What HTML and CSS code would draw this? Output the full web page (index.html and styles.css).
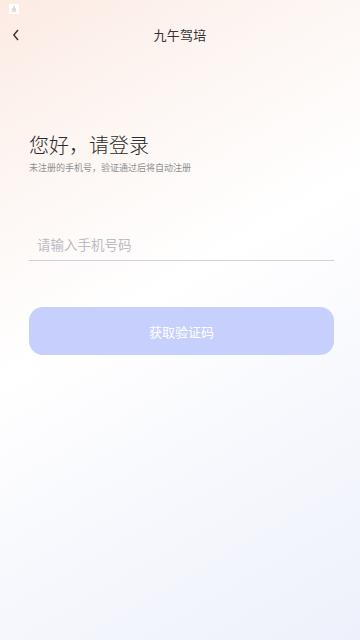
FILE: index.html
```html
<!DOCTYPE html>
<html lang="zh">
<head>
<meta charset="utf-8">
<link rel="stylesheet" href="styles.css">
</head>
<body>
<div class="page">
  <div class="status"><span class="status-icon"><svg width="10" height="10" viewBox="0 0 10 10"><rect width="10" height="10" rx="1" fill="#fff"/><path d="M3.2 4.2 h3.6 v2.6 h-3.6 Z M2.5 7.2 h5 v0.8 h-5 Z M4 2.6 h2 v1.2 h-2 Z" fill="#d9d2ce"/></svg></span></div>
  <div class="navbar">
    <span class="back"><svg width="8" height="12" viewBox="0 0 8 12"><path d="M6 1 L1.8 6 L6 11" fill="none" stroke="#333" stroke-width="1.4"/></svg></span>
    <span class="title">九午驾培</span>
  </div>
  <div class="content">
    <h1 class="heading">您好，请登录</h1>
    <p class="sub">未注册的手机号，验证通过后将自动注册</p>
    <div class="field"><span class="placeholder">请输入手机号码</span></div>
    <div class="btn">获取验证码</div>
  </div>
</div>
</body>
</html>
```
FILE: styles.css
```css
html, body { margin: 0; padding: 0; }
body {
  font-family: "Noto Sans CJK SC", "Noto Sans", sans-serif;
  width: 360px;
  height: 640px;
  overflow: hidden;
}
svg { display: block; }
.page {
  width: 360px;
  height: 640px;
  background: linear-gradient(150deg, #fcebe3 0%, #fdf6f3 22%, #ffffff 45%, #f7f8fd 70%, #eef1fb 100%);
}
.status { height: 20px; padding-left: 9px; padding-top: 4px; box-sizing: border-box; }
.status-icon { display: block; width: 10px; height: 10px; }
.navbar {
  position: relative;
  height: 30px;
  display: flex;
  align-items: center;
  justify-content: center;
}
.back { position: absolute; left: 12px; top: 9px; display: block; }
.title { font-size: 13px; color: #333; letter-spacing: 0.3px; line-height: 30px; }
.content { padding: 0 26px 0 29px; }
.heading {
  margin: 81px 0 0 0;
  font-size: 20px;
  font-weight: 300;
  color: #2a2a2a;
  line-height: 28px;
}
.sub { margin: 2px 0 0 0; font-size: 9px; color: #8f8f8f; line-height: 14px; }
.field {
  margin-top: 53px;
  height: 32px;
  border-bottom: 1px solid #cdd0e0;
  padding-left: 8px;
  display: flex;
  align-items: center;
}
.placeholder { font-size: 13.5px; color: #bcbcc2; }
.btn {
  margin-top: 46px;
  height: 48px;
  border-radius: 14px;
  background: #c7d0fc;
  color: #fff;
  font-size: 13px;
  display: flex;
  align-items: center;
  justify-content: center;
}
```
